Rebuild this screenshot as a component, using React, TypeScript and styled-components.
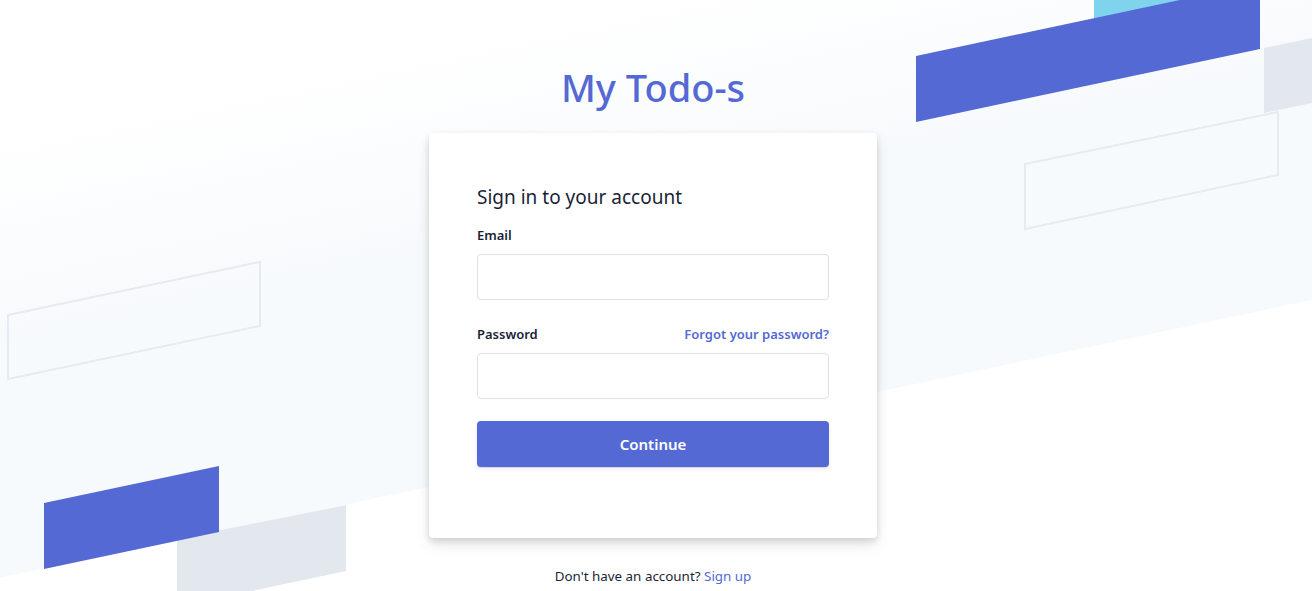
import React from "react";
import styled, { createGlobalStyle } from "styled-components";

const GlobalStyle = createGlobalStyle`
  html, body { margin: 0; padding: 0; background: #ffffff; }
  body { font-family: "Noto Sans", "Open Sans", "Liberation Sans", sans-serif; color: #1a1f36; }
  * { box-sizing: border-box; }
`;

const Page = styled.div`
  position: relative;
  min-height: 591px;
  overflow: hidden;
`;

const Backdrop = styled.svg`
  position: absolute;
  inset: 0;
  width: 100%;
  height: 100%;
  z-index: 0;
`;

const Content = styled.main`
  position: relative;
  z-index: 1;
  display: flex;
  flex-direction: column;
  align-items: center;
  padding: 63px 6px 0 0;
`;

const Brand = styled.h1`
  margin: 0 0 22px;
  font-size: 38px;
  line-height: 48px;
  font-weight: 500;
  color: #5469d4;
`;

const Card = styled.section`
  width: 448px;
  background: #ffffff;
  border-radius: 4px;
  padding: 50px 48px 71px;
  box-shadow: rgba(60, 66, 87, 0.12) 0px 7px 14px 0px, rgba(0, 0, 0, 0.12) 0px 3px 6px 0px;
  display: flex;
  flex-direction: column;
`;

const Heading = styled.h2`
  margin: 0 0 14px;
  font-size: 19px;
  line-height: 28px;
  font-weight: 400;
  color: #1a1f36;
`;

const Field = styled.div<{ $gap?: number }>`
  display: flex;
  flex-direction: column;
  margin-bottom: ${(p) => p.$gap ?? 24}px;
`;

const LabelRow = styled.div`
  display: flex;
  justify-content: space-between;
  align-items: center;
  height: 20px;
  margin-bottom: 9px;
`;

const Label = styled.label`
  font-size: 13px;
  line-height: 20px;
  font-weight: 600;
  color: #1a1f36;
`;

const Link = styled.a<{ $bold?: boolean; $size?: number }>`
  font-size: ${(p) => p.$size ?? 13}px;
  line-height: 20px;
  font-weight: ${(p) => (p.$bold ? 600 : 400)};
  color: #5469d4;
  text-decoration: none;
`;

const Input = styled.input`
  height: 46px;
  width: 100%;
  border: 1px solid #dfe1e6;
  border-radius: 4px;
  background: #ffffff;
  font-size: 16px;
  padding: 0 16px;
  outline: none;
`;

const Button = styled.button`
  height: 46px;
  width: 100%;
  border: none;
  border-radius: 4px;
  background: #5469d4;
  color: #ffffff;
  font-family: inherit;
  font-size: 15px;
  font-weight: 600;
  cursor: pointer;
  box-shadow: rgba(0, 0, 0, 0.12) 0px 1px 1px 0px, rgba(60, 66, 87, 0.08) 0px 2px 5px 0px;
`;

const Footer = styled.p`
  margin: 28px 0 0;
  font-size: 13.4px;
  line-height: 20px;
  color: #1a1f36;
`;

function Background() {
  return (
    <Backdrop viewBox="0 0 1312 591" preserveAspectRatio="xMinYMin slice" aria-hidden="true">
      <defs>
        <linearGradient id="band" gradientUnits="userSpaceOnUse" x1="0" y1="0" x2="0" y2="200" gradientTransform="rotate(-12 656 0)">
          <stop offset="0" stopColor="#ffffff" />
          <stop offset="1" stopColor="#f7fafc" />
        </linearGradient>
      </defs>
      <polygon points="-20,-20 1340,-20 1340,294 -20,582" fill="url(#band)" />
      <polygon points="8,315 260,262 260,326 8,379" fill="none" stroke="#e6ebf1" strokeWidth="2" />
      <polygon points="1025,164 1278,112 1278,175 1025,229" fill="none" stroke="#e6ebf1" strokeWidth="2" />
      <polygon points="1094,-40 1200,-62 1200,0 1094,19" fill="#7fd3ed" />
      <polygon points="916,56 1260,-17 1260,49 916,122" fill="#5469d4" />
      <polygon points="1264,48 1340,32 1340,97 1264,113" fill="#e3e8ee" />
      <polygon points="177,539 346,505 346,571 177,607" fill="#e3e8ee" />
      <polygon points="44,503 219,466 219,532 44,569" fill="#5469d4" />
    </Backdrop>
  );
}

export default function App() {
  return (
    <>
      <GlobalStyle />
      <Page>
        <Background />
        <Content>
          <Brand>My Todo-s</Brand>
          <Card>
            <Heading>Sign in to your account</Heading>
            <Field>
              <LabelRow>
                <Label htmlFor="email">Email</Label>
              </LabelRow>
              <Input id="email" type="email" />
            </Field>
            <Field $gap={22}>
              <LabelRow>
                <Label htmlFor="password">Password</Label>
                <Link href="#" $bold>Forgot your password?</Link>
              </LabelRow>
              <Input id="password" type="password" />
            </Field>
            <Button type="button">Continue</Button>
          </Card>
          <Footer>
            Don't have an account? <Link href="#" $size={13.4}>Sign up</Link>
          </Footer>
        </Content>
      </Page>
    </>
  );
}
